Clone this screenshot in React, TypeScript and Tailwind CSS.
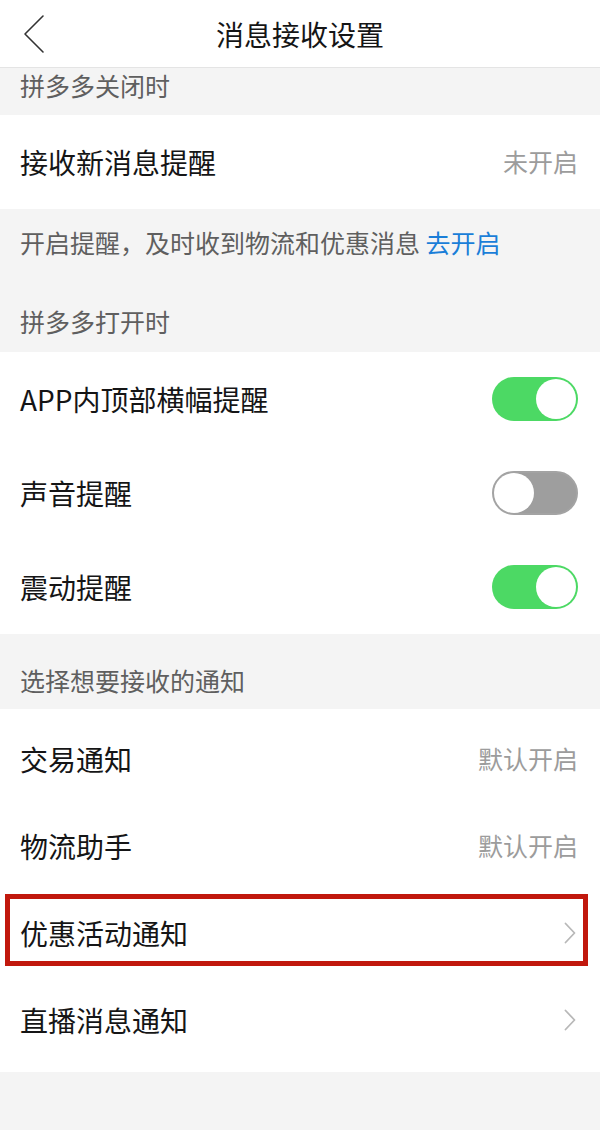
import React from "react";

const Toggle = ({ on }: { on: boolean }) =>
  on ? (
    <div className="w-[86px] h-[44px] rounded-full bg-[#4cd964] p-[2px] flex justify-end">
      <div className="w-[40px] h-[40px] rounded-full bg-white" />
    </div>
  ) : (
    <div className="w-[86px] h-[44px] rounded-full bg-[#9e9e9e] border-[2px] border-[#a3a3a3] flex justify-start">
      <div className="w-[40px] h-[40px] rounded-full bg-white" />
    </div>
  );

const Chevron = () => (
  <svg width="12" height="22" viewBox="0 0 12 22" fill="none">
    <path d="M1.5 1.5 L10.5 11 L1.5 20.5" stroke="#b8b8b8" strokeWidth="1.8" strokeLinecap="round" strokeLinejoin="round" />
  </svg>
);

export default function App() {
  return (
    <div
      className="w-[600px] h-[1130px] bg-[#f4f4f4] overflow-hidden"
      style={{ fontFamily: '"Noto Sans CJK SC", "Noto Sans", sans-serif' }}
    >
      {/* header */}
      <div className="h-[68px] bg-white border-b border-[#e4e4e4] grid grid-cols-[80px_1fr_80px] items-center">
        <div className="pl-[22px] flex items-center">
          <svg width="24" height="40" viewBox="0 0 24 40" fill="none">
            <path d="M21 2 L3 20 L21 38" stroke="#333333" strokeWidth="1.6" strokeLinecap="round" strokeLinejoin="round" />
          </svg>
        </div>
        <div className="text-center text-[28px] leading-[40px] text-[#151516]">消息接收设置</div>
        <div />
      </div>

      {/* section: closed */}
      <div className="h-[47px] pt-[2px] px-[20px] text-[25px] leading-[30px] text-[#5f5f5f]">拼多多关闭时</div>

      <div className="h-[94px] bg-white px-[20px] pr-[22px] flex items-center justify-between">
        <span className="text-[28px] text-[#151516]">接收新消息提醒</span>
        <span className="text-[25px] text-[#9c9c9c]">未开启</span>
      </div>

      <div className="h-[143px] px-[20px] pt-[18px] flex flex-col gap-[49px]">
        <div className="text-[25px] leading-[30px] text-[#5f5f5f]">
          开启提醒，及时收到物流和优惠消息 <span className="text-[#1a7ed8]">去开启</span>
        </div>
        <div className="text-[25px] leading-[30px] text-[#5f5f5f]">拼多多打开时</div>
      </div>

      <div className="bg-white">
        <div className="h-[94px] px-[20px] pr-[22px] flex items-center justify-between">
          <span className="text-[28px] text-[#151516]">APP内顶部横幅提醒</span>
          <Toggle on />
        </div>
        <div className="h-[93px] px-[20px] pr-[22px] flex items-center justify-between">
          <span className="text-[28px] text-[#151516]">声音提醒</span>
          <Toggle on={false} />
        </div>
        <div className="h-[95px] px-[20px] pr-[22px] flex items-center justify-between">
          <span className="text-[28px] text-[#151516]">震动提醒</span>
          <Toggle on />
        </div>
      </div>

      <div className="h-[75px] px-[20px] pt-[31px] text-[25px] leading-[30px] text-[#5f5f5f]">选择想要接收的通知</div>

      <div className="bg-white pt-[6px] pb-[9px]">
        <div className="h-[87px] px-[20px] pr-[22px] flex items-center justify-between">
          <span className="text-[28px] text-[#151516]">交易通知</span>
          <span className="text-[25px] text-[#9c9c9c]">默认开启</span>
        </div>
        <div className="h-[87px] px-[20px] pr-[22px] flex items-center justify-between">
          <span className="text-[28px] text-[#151516]">物流助手</span>
          <span className="text-[25px] text-[#9c9c9c]">默认开启</span>
        </div>
        <div className="relative h-[87px] px-[20px] pr-[24px] flex items-center justify-between">
          <span className="text-[28px] text-[#151516]">优惠活动通知</span>
          <Chevron />
          <div className="absolute left-[5px] top-[5px] w-[583px] h-[72px] border-[5px] border-[#c1180d] pointer-events-none" />
        </div>
        <div className="h-[87px] px-[20px] pr-[24px] flex items-center justify-between">
          <span className="text-[28px] text-[#151516]">直播消息通知</span>
          <Chevron />
        </div>
      </div>
    </div>
  );
}
